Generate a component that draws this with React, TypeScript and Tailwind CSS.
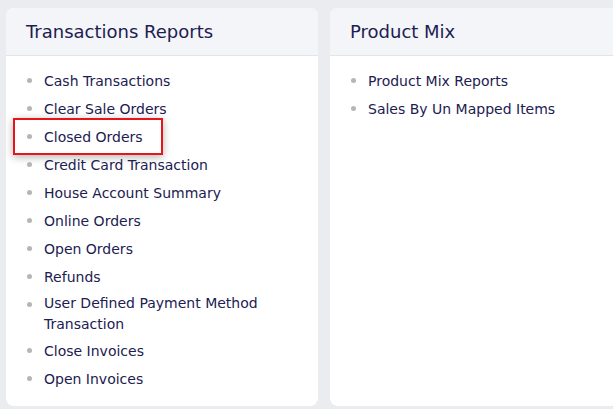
const transactions = [
  "Cash Transactions",
  "Clear Sale Orders",
  "Closed Orders",
  "Credit Card Transaction",
  "House Account Summary",
  "Online Orders",
  "Open Orders",
  "Refunds",
  "User Defined Payment Method Transaction",
  "Close Invoices",
  "Open Invoices",
];

const productMix = ["Product Mix Reports", "Sales By Un Mapped Items"];

function ReportCard({
  title,
  items,
  highlight,
}: {
  title: string;
  items: string[];
  highlight?: string;
}) {
  return (
    <div className="w-[312px] shrink-0 overflow-hidden rounded-lg bg-white">
      <div className="flex h-[48px] items-center border-b border-[#e2e4ea] bg-[#f4f5f9] pl-5">
        <h2 className="text-[18px] leading-none text-[#1c2050]">{title}</h2>
      </div>
      <ul className="pl-[21px] pr-5 pt-[11px] pb-[13px]">
        {items.map((item) => (
          <li
            key={item}
            className="relative flex min-h-[28px] items-center py-[2px] text-[14px] leading-[21px] text-[#1c2050]"
          >
            <span className="mr-[12px] h-[5px] w-[5px] shrink-0 self-start mt-[9px] rounded-full bg-[#b4b6bb]" />
            <span className="w-[230px]">{item}</span>
            {item === highlight ? (
              <div className="pointer-events-none absolute -left-[14px] -top-[5px] h-[37px] w-[150px] border-2 border-[#e8141a] shadow-[0_2px_8px_rgba(0,0,0,0.3)]" />
            ) : null}
          </li>
        ))}
      </ul>
    </div>
  );
}

export default function App() {
  return (
    <div
      className="flex h-[409px] items-stretch gap-3 overflow-hidden bg-[#ebecf0] pl-[6px] pt-2 pb-[3px]"
      style={{ fontFamily: '"DejaVu Sans", sans-serif' }}
    >
      <ReportCard
        title="Transactions Reports"
        items={transactions}
        highlight="Closed Orders"
      />
      <ReportCard title="Product Mix" items={productMix} />
    </div>
  );
}
